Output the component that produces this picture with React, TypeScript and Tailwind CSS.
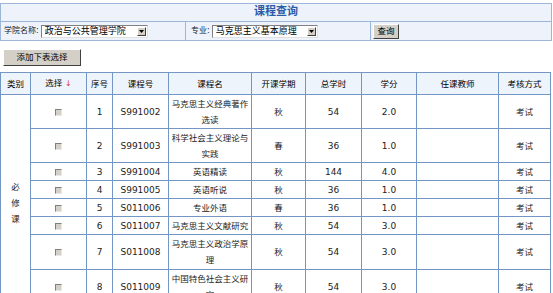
const rows = [
  { n: 1, code: "S991002", name: "马克思主义经典著作选读", term: "秋", hours: "54", credit: "2.0", h: "h-[34px]" },
  { n: 2, code: "S991003", name: "科学社会主义理论与实践", term: "春", hours: "36", credit: "1.0", h: "h-[34px]" },
  { n: 3, code: "S991004", name: "英语精读", term: "秋", hours: "144", credit: "4.0", h: "h-[18px]" },
  { n: 4, code: "S991005", name: "英语听说", term: "秋", hours: "36", credit: "1.0", h: "h-[18px]" },
  { n: 5, code: "S011006", name: "专业外语", term: "春", hours: "36", credit: "1.0", h: "h-[18px]" },
  { n: 6, code: "S011007", name: "马克思主义文献研究", term: "秋", hours: "54", credit: "3.0", h: "h-[18px]" },
  { n: 7, code: "S011008", name: "马克思主义政治学原理", term: "秋", hours: "54", credit: "3.0", h: "h-[35px]" },
  { n: 8, code: "S011009", name: "中国特色社会主义研究", term: "秋", hours: "54", credit: "3.0", h: "h-[35px]" },
];

const font = "font-['DejaVu_Sans','Noto_Sans_CJK_SC',sans-serif]";
const cell = "border border-[#7396c4] text-center align-middle p-0";

function Select({ value, width }: { value: string; width: string }) {
  return (
    <div className={`flex items-center ${width} h-[13px] bg-white border border-t-[#808080] border-l-[#808080] border-b-[#e0e0e0] border-r-[#e0e0e0]`}>
      <span className="flex-1 pl-[3px] text-[9px] leading-[11px] text-black truncate">{value}</span>
      <span className="flex items-center justify-center w-[9px] h-[9px] mr-[1px] bg-[#d4d0c8] border border-t-white border-l-white border-b-[#404040] border-r-[#404040]">
        <svg width="5" height="3" viewBox="0 0 5 3"><path d="M0 0 L5 0 L2.5 3 Z" fill="#000" /></svg>
      </span>
    </div>
  );
}

function Check() {
  return (
    <span className="inline-block w-[7px] h-[7px] bg-[#d4d0c8] border border-t-[#808080] border-l-[#808080] border-b-[#e8e8e8] border-r-[#e8e8e8] align-middle" />
  );
}

export default function App() {
  return (
    <div className={`w-[553px] h-[293px] overflow-hidden bg-white pt-[3px] ${font} text-[8.5px] text-[#222]`}>
      {/* query panel */}
      <div className="w-[552px] border border-[#9cb6d8] bg-[#eef3fb]">
        <div className="h-[18px] flex items-center justify-center border-b border-[#9cb6d8] text-[11px] font-bold text-[#2b5ca8]">
          课程查询
        </div>
        <div className="h-[18px] flex items-stretch">
          <div className="w-[185px] flex items-center pl-[3px] gap-[2px] border-r border-[#9cb6d8]">
            <span className="text-[8px] text-[#222]">学院名称:</span>
            <Select value="政治与公共管理学院" width="w-[107px]" />
          </div>
          <div className="w-[185px] flex items-center pl-[5px] gap-[2px] border-r border-[#9cb6d8]">
            <span className="text-[8px] text-[#222]">专业:</span>
            <Select value="马克思主义基本原理" width="w-[106px]" />
          </div>
          <div className="flex items-center pl-[2px]">
            <button className="w-[26px] h-[15px] bg-[#d4d0c8] border border-t-white border-l-white border-b-[#404040] border-r-[#404040] text-[8.5px] leading-[11px] text-black">
              查询
            </button>
          </div>
        </div>
      </div>

      <div className="h-[31px] flex items-center pl-[3px] pt-[2px]">
        <button className="w-[78px] h-[17px] bg-[#d4d0c8] border border-t-white border-l-white border-b-[#404040] border-r-[#404040] text-[8.5px] leading-[11px] text-black">
          添加下表选择
        </button>
      </div>

      <table className="border-collapse table-fixed w-[550px] leading-[16px]">
        <colgroup>
          <col className="w-[30px]" />
          <col className="w-[56px]" />
          <col className="w-[26px]" />
          <col className="w-[56px]" />
          <col className="w-[83px]" />
          <col className="w-[54px]" />
          <col className="w-[56px]" />
          <col className="w-[55px]" />
          <col className="w-[82px]" />
          <col className="w-[52px]" />
        </colgroup>
        <thead>
          <tr className="h-[22px] bg-[#eef4fc] text-black">
            <td className={cell}>类别</td>
            <td className={cell}>
              选择 <span className="text-[#e03030] text-[8px]">↓</span>
            </td>
            <td className={cell}>序号</td>
            <td className={cell}>课程号</td>
            <td className={cell}>课程名</td>
            <td className={cell}>开课学期</td>
            <td className={cell}>总学时</td>
            <td className={cell}>学分</td>
            <td className={cell}>任课教师</td>
            <td className={cell}>考核方式</td>
          </tr>
        </thead>
        <tbody>
          {rows.map((r, i) => (
            <tr key={r.n} className={r.h}>
              {i === 0 && (
                <td rowSpan={9} className={`${cell} align-top pt-[84px] leading-[16px]`}>
                  必<br />修<br />课
                </td>
              )}
              <td className={cell}><Check /></td>
              <td className={`${cell} text-[9px]`}>{r.n}</td>
              <td className={`${cell} text-[9px]`}>{r.code}</td>
              <td className={`${cell} px-[2px]`}>{r.name}</td>
              <td className={cell}>{r.term}</td>
              <td className={`${cell} text-[9px]`}>{r.hours}</td>
              <td className={`${cell} text-[9px]`}>{r.credit}</td>
              <td className={cell}></td>
              <td className={cell}>考试</td>
            </tr>
          ))}
          <tr className="h-[34px]">
            <td className={cell}><Check /></td>
            <td className={`${cell} text-[9px]`}>9</td>
            <td className={`${cell} text-[9px]`}>S011010</td>
            <td className={cell}>西方政治思想史</td>
            <td className={cell}>春</td>
            <td className={`${cell} text-[9px]`}>54</td>
            <td className={`${cell} text-[9px]`}>3.0</td>
            <td className={cell}></td>
            <td className={cell}>考试</td>
          </tr>
        </tbody>
      </table>
    </div>
  );
}
